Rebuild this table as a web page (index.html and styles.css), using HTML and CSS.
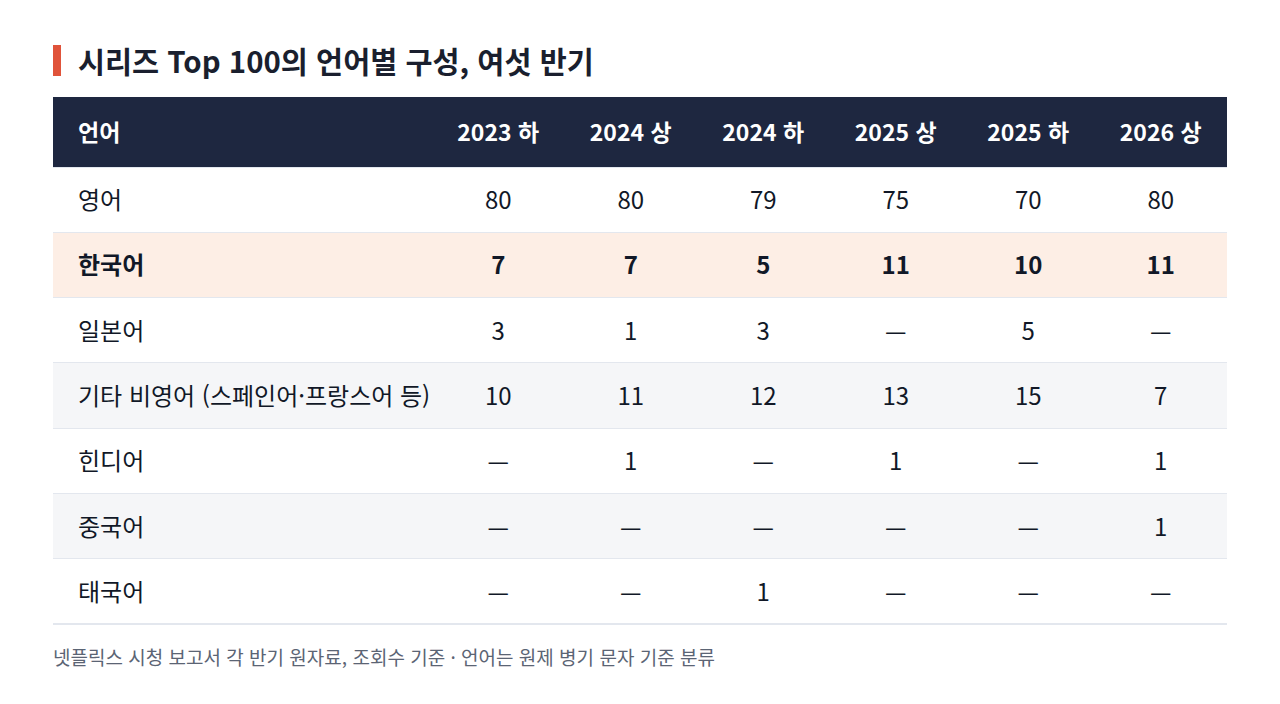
FILE: index.html
```html
<!DOCTYPE html>
<html lang="ko">
<head>
<meta charset="utf-8">
<link rel="stylesheet" href="styles.css">
</head>
<body>
<div class="page">
  <h1 class="title">시리즈 Top 100의 언어별 구성, 여섯 반기</h1>
  <table class="tbl">
    <colgroup>
      <col class="c-lang"><col class="c-num"><col class="c-num"><col class="c-num"><col class="c-num"><col class="c-num"><col class="c-num">
    </colgroup>
    <thead>
      <tr><th class="lang">언어</th><th>2023 하</th><th>2024 상</th><th>2024 하</th><th>2025 상</th><th>2025 하</th><th>2026 상</th></tr>
    </thead>
    <tbody>
      <tr><td class="lang">영어</td><td>80</td><td>80</td><td>79</td><td>75</td><td>70</td><td>80</td></tr>
      <tr class="hl"><td class="lang">한국어</td><td>7</td><td>7</td><td>5</td><td>11</td><td>10</td><td>11</td></tr>
      <tr><td class="lang">일본어</td><td>3</td><td>1</td><td>3</td><td>—</td><td>5</td><td>—</td></tr>
      <tr class="alt"><td class="lang">기타 비영어 (스페인어·프랑스어 등)</td><td>10</td><td>11</td><td>12</td><td>13</td><td>15</td><td>7</td></tr>
      <tr><td class="lang">힌디어</td><td>—</td><td>1</td><td>—</td><td>1</td><td>—</td><td>1</td></tr>
      <tr class="alt"><td class="lang">중국어</td><td>—</td><td>—</td><td>—</td><td>—</td><td>—</td><td>1</td></tr>
      <tr><td class="lang">태국어</td><td>—</td><td>—</td><td>1</td><td>—</td><td>—</td><td>—</td></tr>
    </tbody>
  </table>
  <p class="note">넷플릭스 시청 보고서 각 반기 원자료, 조회수 기준 · 언어는 원제 병기 문자 기준 분류</p>
</div>
</body>
</html>
```

FILE: styles.css
```css
* { box-sizing: border-box; }
html, body { margin: 0; padding: 0; background: #ffffff; }
body {
  font-family: "Noto Sans CJK KR", "Noto Sans", sans-serif;
  color: #111827;
}
.page {
  width: 1174px;
  margin: 0 0 0 53px;
  padding-top: 45px;
}
.title {
  margin: 0 0 21px 0;
  padding-left: 17px;
  border-left: 8px solid #e0533a;
  font-size: 29.4px;
  font-weight: 700;
  line-height: 31px;
  height: 31px;
  display: flex;
  align-items: center;
  color: #1a1f2e;
}
.tbl {
  width: 1174px;
  border-collapse: collapse;
  table-layout: fixed;
}
.c-lang { width: 379px; }
.c-num { width: 132.5px; }
.tbl th, .tbl td {
  text-align: center;
  padding: 0;
  white-space: nowrap;
}
.tbl th {
  background: #1e2740;
  color: #ffffff;
  font-weight: 700;
  font-size: 23px;
  height: 70px;
  padding-bottom: 1px;
}
.tbl td {
  font-size: 24px;
  height: 65.3px;
  border-top: 1px solid #e3e7ee;
  font-weight: 400;
  padding-bottom: 2px;
}
.tbl tbody tr:last-child td { border-bottom: 2px solid #e3e7ee; }
.tbl .lang { text-align: left; padding-left: 25px; }
.tbl tr.hl td { background: #fdeee5; font-weight: 700; }
.tbl tr.alt td { background: #f5f6f8; }
.note {
  margin: 18px 0 0 0;
  font-size: 19px;
  color: #5b6474;
  line-height: 28px;
}
```
